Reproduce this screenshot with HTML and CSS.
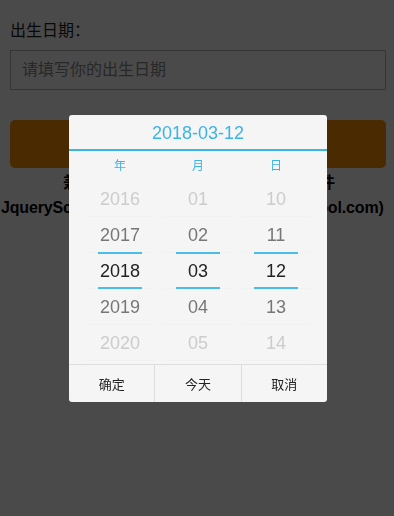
FILE: index.html
```html
<!DOCTYPE html>
<html lang="zh-CN">
<head>
    <meta charset="UTF-8">
    <meta name="viewport" content="width=device-width, initial-scale=1.0">
    <title>日期选择</title>
    <link rel="stylesheet" href="styles.css">
</head>
<body>

<div class="page">
    <div class="field-label">出生日期：</div>
    <input class="field-input" type="text" placeholder="请填写你的出生日期">
    <button class="submit-btn"></button>
    <div class="note">
        <div class="note-line">兼容安卓苹果手机的日期滚动选择插件</div>
        <div class="note-line note-link">JqueryScroll手机端日期选择控件(jqueryschool.com)</div>
    </div>
</div>

<!-- 遮罩层和日期弹窗 -->
<div class="mask">
    <div class="picker">
        <div class="picker-title">2018-03-12</div>
        <div class="picker-body">
            <div class="col">
                <div class="col-head">年</div>
                <div class="item far">2016</div>
                <div class="item near">2017</div>
                <div class="item current">2018</div>
                <div class="item near">2019</div>
                <div class="item far">2020</div>
            </div>
            <div class="col">
                <div class="col-head">月</div>
                <div class="item far">01</div>
                <div class="item near">02</div>
                <div class="item current">03</div>
                <div class="item near">04</div>
                <div class="item far">05</div>
            </div>
            <div class="col">
                <div class="col-head">日</div>
                <div class="item far">10</div>
                <div class="item near">11</div>
                <div class="item current">12</div>
                <div class="item near">13</div>
                <div class="item far">14</div>
            </div>
        </div>
        <div class="picker-btns">
            <div class="picker-btn">确定</div>
            <div class="picker-btn">今天</div>
            <div class="picker-btn">取消</div>
        </div>
    </div>
</div>

</body>
</html>
```

FILE: styles.css
```css
body {
    margin: 0;
    background-color: #fff;
    font-family: 'Liberation Sans', Arial, 'Noto Sans CJK SC', sans-serif;
    overflow: hidden;
}

.page {
    padding: 20px 8px 0 10px;
}

.field-label {
    font-size: 16px;
    color: #222;
    line-height: 22px;
}

.field-input {
    display: block;
    box-sizing: border-box;
    width: 376px;
    height: 40px;
    margin-top: 8px;
    padding: 0 11px;
    border: 1px solid #bbb;
    font-size: 16px;
    font-family: 'Liberation Sans', 'Noto Sans CJK SC', sans-serif;
    color: #333;
    outline: none;
}

.field-input::placeholder {
    color: #8a8a8a;
}

.submit-btn {
    display: block;
    width: 376px;
    height: 48px;
    margin-top: 30px;
    border: none;
    border-radius: 5px;
    background-color: #ff9100;
}

.note {
    margin-left: -10px;
    margin-right: -8px;
    margin-top: 2px;
    padding-left: 4px;
    text-align: center;
    font-weight: bold;
    font-size: 16px;
    color: #000;
    line-height: 25px;
    white-space: nowrap;
}

.note-link {
    text-align: left;
    margin-left: -3px;
    letter-spacing: -0.15px;
}

.mask {
    position: fixed;
    top: 0;
    left: 0;
    right: 0;
    bottom: 0;
    background-color: rgba(0, 0, 0, 0.71);
    display: flex;
    justify-content: center;
    align-items: center;
}

.picker {
    width: 258px;
    margin-left: 2px;
    background-color: #f5f5f5;
    border-radius: 3px;
    overflow: hidden;
}

.picker-title {
    height: 34px;
    line-height: 36px;
    text-align: center;
    font-size: 18px;
    color: #3bb4e6;
    border-bottom: 2px solid #3bb4e6;
}

.picker-body {
    display: flex;
    justify-content: center;
    padding-bottom: 3px;
    border-bottom: 1px solid #ddd;
}

.col {
    width: 78px;
    display: flex;
    flex-direction: column;
    align-items: center;
}

.col-head {
    height: 30px;
    line-height: 30px;
    font-size: 12px;
    color: #3bb4e6;
}

.item {
    width: 70px;
    height: 36px;
    line-height: 36px;
    text-align: center;
    font-size: 18px;
    border-bottom: 1px solid #f1f1f1;
    box-sizing: border-box;
}

.far {
    color: #ccc;
}

.near {
    color: #777;
}

.current {
    color: #222;
    position: relative;
}

/* 选中行上下两条蓝线 */
.current::before,
.current::after {
    content: '';
    position: absolute;
    left: 13px;
    width: 44px;
    height: 2px;
    background-color: #4bbde8;
}

.current::before {
    top: -1px;
}

.current::after {
    bottom: -1px;
}

.picker-btns {
    display: flex;
}

.picker-btn {
    flex: 1;
    height: 37px;
    line-height: 37px;
    text-align: center;
    font-size: 13px;
    color: #222;
    font-family: 'Noto Sans CJK SC', sans-serif;
    border-left: 1px solid #ddd;
}

.picker-btn:first-child {
    border-left: none;
}
```
